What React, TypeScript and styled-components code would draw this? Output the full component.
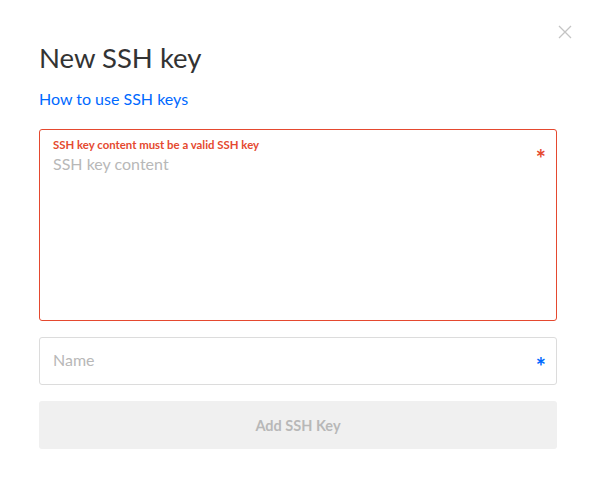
import { createGlobalStyle } from "styled-components"
import styled from "styled-components"

const GlobalStyle = createGlobalStyle`
  html, body {
    margin: 0;
    padding: 0;
    background: #fff;
    font-family: "Lato", "Open Sans", sans-serif;
  }
  * { box-sizing: border-box; }
`

const Modal = styled.div`
  position: relative;
  width: 597px;
  height: 496px;
  padding: 40px 40px 0 39px;
  display: flex;
  flex-direction: column;
`

const CloseButton = styled.button`
  position: absolute;
  top: 25px;
  right: 25px;
  width: 14px;
  height: 14px;
  padding: 0;
  border: none;
  background: none;
  cursor: pointer;
  color: #c4c4c4;
`

const Title = styled.h2`
  margin: 0;
  font-size: 27.5px;
  font-weight: 400;
  color: #333;
  line-height: 36px;
`

const HelpLink = styled.a`
  margin-top: 13px;
  font-size: 16px;
  color: #0069ff;
  text-decoration: none;
  line-height: 20px;
  align-self: flex-start;
`

const Form = styled.form`
  margin-top: 20px;
  display: flex;
  flex-direction: column;
  gap: 16px;
`

const Field = styled.div<{ $error?: boolean; $tall?: boolean }>`
  position: relative;
  height: ${(p) => (p.$tall ? "192px" : "48px")};
  border: 1px solid ${(p) => (p.$error ? "#e5492f" : "#dcdcdc")};
  border-radius: 3px;
  display: flex;
  flex-direction: column;
  padding: ${(p) => (p.$tall ? "9px 40px 0 13px" : "0 40px 3px 13px")};
  justify-content: ${(p) => (p.$tall ? "flex-start" : "center")};
`

const ErrorLabel = styled.div`
  font-size: 11.4px;
  font-weight: 700;
  color: #e5492f;
  line-height: 12px;
`

const TextArea = styled.textarea`
  flex: 1;
  border: none;
  outline: none;
  resize: none;
  padding: 3px 0 0;
  font-family: inherit;
  font-size: 16px;
  color: #333;
  &::placeholder { color: #b8b8b8; }
`

const Input = styled.input`
  border: none;
  outline: none;
  padding: 0;
  font-family: inherit;
  font-size: 16px;
  color: #333;
  &::placeholder { color: #b8b8b8; }
`

const Required = styled.span<{ $error?: boolean }>`
  position: absolute;
  right: 10px;
  top: 17px;
  font-size: 24px;
  font-weight: 700;
  line-height: 1;
  color: ${(p) => (p.$error ? "#e5492f" : "#0069ff")};
`

const SubmitButton = styled.button`
  height: 48px;
  border: none;
  border-radius: 3px;
  background: #f0f0f0;
  color: #b8b8b8;
  font-family: inherit;
  font-size: 14.5px;
  font-weight: 700;
  cursor: not-allowed;
`

export default function App() {
  return (
    <>
      <GlobalStyle />
      <Modal>
        <CloseButton aria-label="Close">
          <svg viewBox="0 0 14 14" width="14" height="14" stroke="currentColor" strokeWidth="1.3" fill="none">
            <path d="M1 1L13 13M13 1L1 13" />
          </svg>
        </CloseButton>
        <Title>New SSH key</Title>
        <HelpLink href="#">How to use SSH keys</HelpLink>
        <Form>
          <Field $error $tall>
            <ErrorLabel>SSH key content must be a valid SSH key</ErrorLabel>
            <TextArea placeholder="SSH key content" />
            <Required $error>*</Required>
          </Field>
          <Field>
            <Input placeholder="Name" />
            <Required>*</Required>
          </Field>
          <SubmitButton type="button" disabled>Add SSH Key</SubmitButton>
        </Form>
      </Modal>
    </>
  )
}
